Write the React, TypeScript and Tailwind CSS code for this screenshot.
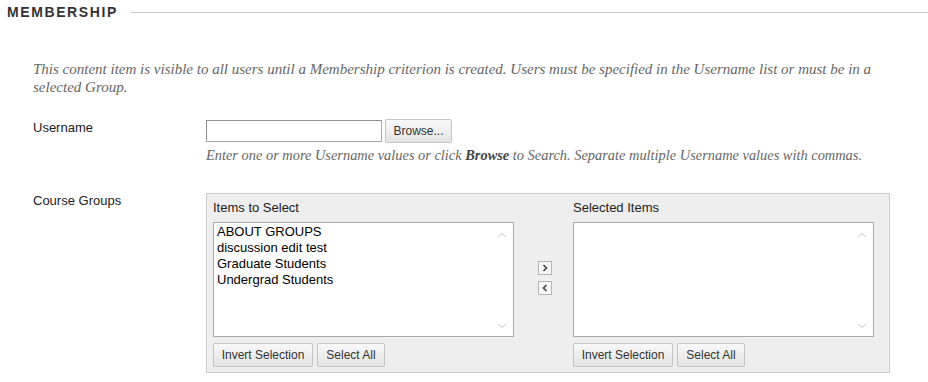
import { useState } from 'react';

const groups = ['ABOUT GROUPS', 'discussion edit test', 'Graduate Students', 'Undergrad Students'];

function ScrollList({ items }: { items: string[] }) {
    return (
        <div className="relative h-[115px] w-[301px] border border-[#a9a9a9] bg-white pl-[3px] pt-[1px]">
            {items.map((item) => (
                <div key={item} className="text-[13px] leading-[16px] text-black">
                    {item}
                </div>
            ))}
            <svg className="absolute right-[6px] top-[9px]" width="10" height="6" viewBox="0 0 10 6">
                <path d="M1 5 L5 1.5 L9 5" fill="none" stroke="#c4c4c4" strokeWidth="1" />
            </svg>
            <svg className="absolute bottom-[7px] right-[6px]" width="10" height="6" viewBox="0 0 10 6">
                <path d="M1 1 L5 4.5 L9 1" fill="none" stroke="#c4c4c4" strokeWidth="1" />
            </svg>
        </div>
    );
}

function GrayButton({ children, className = '' }: { children: React.ReactNode; className?: string }) {
    return (
        <button
            type="button"
            className={`h-[24px] rounded-[2px] border border-[#c4c4c4] bg-gradient-to-b from-[#f8f8f8] to-[#e4e4e4] text-[12px] text-[#333] ${className}`}
        >
            {children}
        </button>
    );
}

function ArrowButton({ dir }: { dir: 'right' | 'left' }) {
    return (
        <button type="button" className="flex h-[14px] w-[14px] items-center justify-center border border-[#b5b5b5] bg-[#f6f6f6]">
            <svg width="6" height="8" viewBox="0 0 6 8">
                {dir === 'right' ? (
                    <path d="M1.5 1 L4.5 4 L1.5 7" fill="none" stroke="#444" strokeWidth="1.6" />
                ) : (
                    <path d="M4.5 1 L1.5 4 L4.5 7" fill="none" stroke="#444" strokeWidth="1.6" />
                )}
            </svg>
        </button>
    );
}

export default function App() {
    const [username, setUsername] = useState('');

    return (
        <div className="min-h-[382px] w-[928px] bg-white font-['Liberation_Sans',Arial,sans-serif] text-[#222]">
            {/* section heading */}
            <div className="flex items-center pl-[7px] pt-[3px]">
                <h2 className="text-[14px] font-bold leading-[18px] tracking-[1.6px] text-[#333]">MEMBERSHIP</h2>
                <div className="ml-[13px] h-px flex-1 bg-[#cccccc]" />
            </div>

            <div className="pl-[33px]">
                <p className="mt-[39px] w-[845px] font-['Liberation_Serif',Georgia,serif] text-[15px] italic leading-[18px] text-[#666]">
                    This content item is visible to all users until a Membership criterion is created. Users must be specified in the Username list or must be in a selected Group.
                </p>

                {/* username */}
                <div className="mt-[23px] flex">
                    <label htmlFor="username" className="w-[173px] shrink-0 text-[13px] leading-[18px] text-[#222]">
                        Username
                    </label>
                    <div>
                        <div className="flex items-center">
                            <input
                                id="username"
                                value={username}
                                onChange={(e) => setUsername(e.target.value)}
                                className="h-[22px] w-[176px] border border-[#a9a9a9] border-l-[#8f8f8f] border-t-[#8f8f8f] bg-white px-1 text-[13px] outline-none"
                            />
                            <GrayButton className="ml-[3px] w-[67px]">Browse...</GrayButton>
                        </div>
                        <p className="mt-[3px] whitespace-nowrap font-['Liberation_Serif',Georgia,serif] text-[14.4px] italic leading-[18px] text-[#666]">
                            Enter one or more Username values or click <b className="text-[#444]">Browse</b> to Search. Separate multiple Username values with commas.
                        </p>
                    </div>
                </div>

                {/* course groups */}
                <div className="mt-[29px] flex">
                    <div className="-mt-px w-[173px] shrink-0 text-[13px] leading-[18px] text-[#222]">Course Groups</div>
                    <div className="flex h-[180px] w-[684px] border border-[#cccccc] bg-[#eeeeee] pl-[6px] pt-[6px]">
                        <div className="flex flex-col">
                            <div className="text-[13px] leading-[16px] text-[#222]">Items to Select</div>
                            <div className="mt-[6px]">
                                <ScrollList items={groups} />
                            </div>
                            <div className="mt-[6px] flex gap-[4px]">
                                <GrayButton className="w-[100px]">Invert Selection</GrayButton>
                                <GrayButton className="w-[68px]">Select All</GrayButton>
                            </div>
                        </div>
                        <div className="flex w-[59px] flex-col items-center justify-center gap-[6px] pb-[16px] pl-[2px]">
                            <ArrowButton dir="right" />
                            <ArrowButton dir="left" />
                        </div>
                        <div className="flex flex-col">
                            <div className="text-[13px] leading-[16px] text-[#222]">Selected Items</div>
                            <div className="mt-[6px]">
                                <ScrollList items={[]} />
                            </div>
                            <div className="mt-[6px] flex gap-[4px]">
                                <GrayButton className="w-[100px]">Invert Selection</GrayButton>
                                <GrayButton className="w-[68px]">Select All</GrayButton>
                            </div>
                        </div>
                    </div>
                </div>
            </div>
        </div>
    );
}
